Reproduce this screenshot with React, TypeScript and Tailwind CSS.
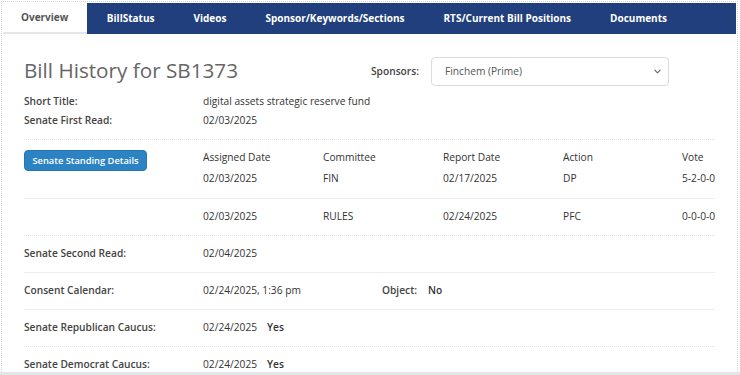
import React from "react";

const tabs = [
  "Overview",
  "BillStatus",
  "Videos",
  "Sponsor/Keywords/Sections",
  "RTS/Current Bill Positions",
  "Documents",
];

const committees = [
  { assigned: "02/03/2025", committee: "FIN", report: "02/17/2025", action: "DP", vote: "5-2-0-0" },
  { assigned: "02/03/2025", committee: "RULES", report: "02/24/2025", action: "PFC", vote: "0-0-0-0" },
];

const cols = "grid grid-cols-[120px_120px_120px_119px_1fr] whitespace-nowrap";

function Label({ children }: { children: React.ReactNode }) {
  return <div className="w-[179px] shrink-0 font-semibold text-[#444]">{children}</div>;
}

export default function App() {
  return (
    <div
      className="w-[740px] h-[375px] overflow-hidden bg-white pt-[1px] pl-[1px] pr-[2px]"
      style={{ fontFamily: '"Open Sans", "Noto Sans", sans-serif' }}
    >
      <div className="flex flex-col h-[371px] border-l border-t border-r border-dotted border-[#d6d6d6] overflow-hidden">
        {/* tab bar */}
        <nav className="flex shrink-0 h-[32px] pt-[1px] pl-[1px] pr-[1px] text-[10px] font-bold">
          {tabs.map((t, i) => (
            <div
              key={t}
              className={
                i === 0
                  ? "flex items-center pl-[18px] pr-[19px] bg-white text-[#555] border-b-2 border-[#e6e6ea]"
                  : "flex items-center px-[19.5px] bg-[#213f7d] text-white"
              }
            >
              {t}
            </div>
          ))}
          <div className="flex-1 bg-[#213f7d]" />
        </nav>

        <main className="shrink-0 px-[22px] text-[10.2px] text-[#333]">
          {/* title row */}
          <div className="flex items-center mt-[23px] h-[29px]">
            <h1 className="w-[347px] text-[20.7px] leading-[28px] text-[#666] font-normal -mt-[3px]">
              Bill History for SB1373
            </h1>
            <span className="font-semibold text-[#444] mr-[12px]">Sponsors:</span>
            <div className="flex items-center justify-between w-[238px] h-[29px] border border-[#dcdcdc] rounded-[4px] pl-[13px] pr-[7px] text-[#555]">
              <span>Finchem (Prime)</span>
              <svg width="7" height="5" viewBox="0 0 8 5" fill="none">
                <path d="M1 1l3 3 3-3" stroke="#666" strokeWidth="1.3" strokeLinecap="round" strokeLinejoin="round" />
              </svg>
            </div>
          </div>

          <div className="mt-[6px] flex h-[19px] items-center">
            <Label>Short Title:</Label>
            <span>digital assets strategic reserve fund</span>
          </div>
          <div className="flex h-[19px] items-center">
            <Label>Senate First Read:</Label>
            <span>02/03/2025</span>
          </div>

          {/* committee table */}
          <div className="mt-[9px] flex h-[59px] border-t border-dotted border-[#e2e2e2]">
            <div className="w-[179px] shrink-0 pt-[10px]">
              <button className="h-[21px] w-[123px] rounded-[4px] bg-[#2c83c3] border border-[#2776b0] text-white text-[9.3px] font-semibold">
                Senate Standing Details
              </button>
            </div>
            <div className="flex-1 pt-[8px]">
              <div className={`${cols} h-[19px] items-center`}>
                <span>Assigned Date</span>
                <span>Committee</span>
                <span>Report Date</span>
                <span>Action</span>
                <span>Vote</span>
              </div>
              <div className={`${cols} h-[24px] items-center`}>
                <span>{committees[0].assigned}</span>
                <span>{committees[0].committee}</span>
                <span>{committees[0].report}</span>
                <span>{committees[0].action}</span>
                <span>{committees[0].vote}</span>
              </div>
            </div>
          </div>
          <div className="flex h-[37px] items-center border-t border-[#eeeeee]">
            <div className="w-[179px] shrink-0" />
            <div className={`${cols} flex-1`}>
              <span>{committees[1].assigned}</span>
              <span>{committees[1].committee}</span>
              <span>{committees[1].report}</span>
              <span>{committees[1].action}</span>
              <span>{committees[1].vote}</span>
            </div>
          </div>

          <div className="flex h-[37px] items-center border-t border-dotted border-[#e2e2e2]">
            <Label>Senate Second Read:</Label>
            <span>02/04/2025</span>
          </div>
          <div className="flex h-[37px] items-center border-t border-[#eeeeee]">
            <Label>Consent Calendar:</Label>
            <span className="w-[179px]">02/24/2025, 1:36 pm</span>
            <span className="font-semibold text-[#444] mr-[11px]">Object:</span>
            <span className="font-semibold">No</span>
          </div>
          <div className="flex h-[37px] items-center border-t border-[#eeeeee]">
            <Label>Senate Republican Caucus:</Label>
            <span className="mr-[10px]">02/24/2025</span>
            <span className="font-semibold">Yes</span>
          </div>
          <div className="flex h-[37px] items-center border-t border-dotted border-[#e2e2e2]">
            <Label>Senate Democrat Caucus:</Label>
            <span className="mr-[10px]">02/24/2025</span>
            <span className="font-semibold">Yes</span>
          </div>
        </main>
      </div>
      <div className="h-[3px] bg-[#e4e6ea] -ml-[1px] -mr-[2px]" />
    </div>
  );
}
